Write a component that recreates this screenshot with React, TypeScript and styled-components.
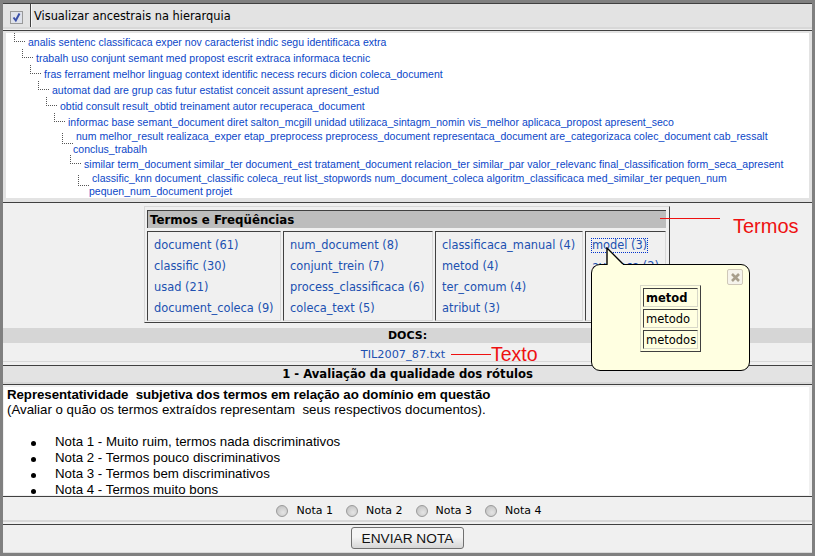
import styled, { createGlobalStyle } from "styled-components";

const Global = createGlobalStyle`
  html, body { margin: 0; padding: 0; background: #f0f0f0; }
  body { font-family: "DejaVu Sans", Verdana, sans-serif; color: #000; }
`;

const treeRows = [
  ["analis sentenc classificaca exper nov caracterist indic segu identificaca extra"],
  ["trabalh uso conjunt semant med propost escrit extraca informaca tecnic"],
  ["fras ferrament melhor linguag context identific necess recurs dicion coleca_document"],
  ["automat dad are grup cas futur estatist conceit assunt apresent_estud"],
  ["obtid consult result_obtid treinament autor recuperaca_document"],
  ["informac base semant_document diret salton_mcgill unidad utilizaca_sintagm_nomin vis_melhor aplicaca_propost apresent_seco"],
  ["num melhor_result realizaca_exper etap_preprocess preprocess_document representaca_document are_categorizaca colec_document cab_ressalt", "conclus_trabalh"],
  ["similar term_document similar_ter document_est tratament_document relacion_ter similar_par valor_relevanc final_classification form_seca_apresent"],
  ["classific_knn document_classific coleca_reut list_stopwords num_document_coleca algoritm_classificaca med_similar_ter pequen_num", "pequen_num_document projet"],
];

const termColumns = [
  ["document (61)", "classific (30)", "usad (21)", "document_coleca (9)"],
  ["num_document (8)", "conjunt_trein (7)", "process_classificaca (6)", "coleca_text (5)"],
  ["classificaca_manual (4)", "metod (4)", "ter_comum (4)", "atribut (3)"],
  ["model (3)", "avaliaca (2)"],
];

const notas = [
  "Nota 1 - Muito ruim, termos nada discriminativos",
  "Nota 2 - Termos pouco discriminativos",
  "Nota 3 - Termos bem discriminativos",
  "Nota 4 - Termos muito bons",
];

export default function App() {
  return (
    <>
      <Global />
      <Page>
        <TopBar>
          <CheckCell>
            <CheckBox>
              <svg width="11" height="11" viewBox="0 0 11 11">
                <path d="M2.5 5.5 L4.8 8.5 L8.5 1.5" fill="none" stroke="#3a4fa8" strokeWidth="2" />
              </svg>
            </CheckBox>
          </CheckCell>
          <TopLabel>Visualizar ancestrais na hierarquia</TopLabel>
        </TopBar>

        <TreeFrame>
          <TreeBox>
            {treeRows.map((lines, i) => (
              <TreeRow key={i} $level={i} $wrapped={lines.length > 1}>
                {lines.map((line, j) => (
                  <TreeLine key={j} $first={j === 0}>{line}</TreeLine>
                ))}
              </TreeRow>
            ))}
          </TreeBox>
        </TreeFrame>

        <TermsArea>
          <TermsPanel>
            <TermsHeader>Termos e Freqüências</TermsHeader>
            <TermsGrid>
              {termColumns.map((col, i) => (
                <TermCell key={i}>
                  {col.map((t, j) => (
                    <TermLink key={t} $focused={i === 3 && j === 0}>{t}</TermLink>
                  ))}
                </TermCell>
              ))}
            </TermsGrid>
          </TermsPanel>
        </TermsArea>

        <DocsBar>DOCS:</DocsBar>
        <DocsRow><DocLink>TIL2007_87.txt</DocLink></DocsRow>

        <SectionBar>1 - Avaliação da qualidade dos rótulos</SectionBar>

        <TextFrame>
          <TextBox>
            <BoldLine>Representatividade&nbsp; subjetiva dos termos em relação ao domínio em questão</BoldLine>
            <br />
            (Avaliar o quão os termos extraídos representam&nbsp; seus respectivos documentos).
            <NotaList>
              {notas.map(n => <NotaItem key={n}>{n}</NotaItem>)}
            </NotaList>
          </TextBox>
        </TextFrame>

        <RadioRow>
          {[1, 2, 3, 4].map(n => (
            <RadioItem key={n}>
              <RadioDot />
              <span>Nota {n}</span>
            </RadioItem>
          ))}
        </RadioRow>

        <ButtonRow>
          <SendButton>ENVIAR NOTA</SendButton>
        </ButtonRow>

        <TermosLine />
        <TermosNote>Termos</TermosNote>
        <TextoLine />
        <TextoNote>Texto</TextoNote>

        <Popup>
          <PopupTail width="18" height="19" viewBox="0 0 18 19">
            <path d="M1 19 L1 1 L17 17 L17 19 Z" fill="#ffffe1" />
            <path d="M1 18 L1 1 L17 17" fill="none" stroke="#000" strokeWidth="1.4" />
          </PopupTail>
          <CloseBtn>
            <svg width="11" height="11" viewBox="0 0 11 11">
              <path d="M2 2 L9 9 M9 2 L2 9" stroke="#a89f8c" strokeWidth="2.6" />
            </svg>
          </CloseBtn>
          <StemTable>
            <StemCell $bold>metod</StemCell>
            <StemCell>metodo</StemCell>
            <StemCell>metodos</StemCell>
          </StemTable>
        </Popup>
      </Page>
    </>
  );
}

const Page = styled.div`
  position: relative;
  box-sizing: border-box;
  width: 815px;
  height: 556px;
  overflow: hidden;
  background: #f0f0f0;
  border: 3px solid #808080;
  display: flex;
  flex-direction: column;
`;

const TopBar = styled.div`
  display: flex;
  height: 26px;
  flex: none;
  background: #e3e3e3;
  border-top: 1px solid #404040;
  border-bottom: 2px solid #d8d8d8;
  box-sizing: border-box;
`;

const CheckCell = styled.div`
  width: 28px;
  display: flex;
  justify-content: center;
  padding-top: 7px;
  box-sizing: border-box;
  border-right: 1px solid #404040;
  box-shadow: 1px 0 0 #f8f8f8;
`;

const CheckBox = styled.div`
  box-sizing: border-box;
  width: 13px;
  height: 13px;
  background: #dfe2ea;
  border: 1px solid #999;
  display: flex;
  align-items: center;
  justify-content: center;
`;

const TopLabel = styled.div`
  font-size: 11.4px;
  line-height: 25px;
  padding-left: 3px;
`;

const TreeFrame = styled.div`
  flex: none;
  height: 173px;
  box-sizing: border-box;
  padding: 2px 3px 4px 3px;
  background: #e3e3e3;
  border-top: 1px solid #404040;
  border-bottom: 1px solid #404040;
  margin-top: 1px;
`;

const TreeBox = styled.div`
  height: 164px;
  background: #fff;
  overflow: hidden;
  padding-top: 1px;
`;

const TreeRow = styled.div<{ $level: number; $wrapped: boolean }>`
  position: relative;
  padding-left: ${p => 19 + p.$level * 8}px;
  font-family: "Liberation Sans", Arial, sans-serif;
  font-size: 10.5px;
  letter-spacing: 0.03px;
  line-height: ${p => (p.$wrapped ? 13 : 16)}px;
  color: #0a46c8;
  white-space: nowrap;

  &::before {
    content: "";
    position: absolute;
    left: ${p => 8 + p.$level * 8}px;
    top: ${p => (p.$wrapped ? 3 : -1)}px;
    width: 10px;
    height: ${p => (p.$wrapped ? 10 : 8)}px;
    border-left: 1px dotted #555;
    border-bottom: 1px dotted #555;
  }
`;

const TreeLine = styled.div<{ $first: boolean }>`
  padding-left: ${p => (p.$first ? 3 : 0)}px;
`;

const TermsArea = styled.div`
  flex: none;
  height: 125px;
  box-sizing: border-box;
  padding: 3px 0 0 141px;
`;

const TermsPanel = styled.div`
  box-sizing: border-box;
  width: 526px;
  height: 117px;
  padding: 3px 3px 0 2px;
  border-top: 1px solid #d8d8d8;
  border-left: 1px solid #d8d8d8;
  border-right: 1px solid #404040;
  border-bottom: 1px solid #404040;
`;

const TermsHeader = styled.div`
  box-sizing: border-box;
  height: 18px;
  background: #bdbdbd;
  border-top: 1px solid #404040;
  border-left: 1px solid #404040;
  font-size: 11.8px;
  font-weight: bold;
  line-height: 18px;
  padding-left: 2px;
`;

const TermsGrid = styled.div`
  display: grid;
  grid-template-columns: 134px 150px 148px 81px;
  gap: 2px;
  margin-top: 3px;
`;

const TermCell = styled.div`
  box-sizing: border-box;
  height: 90px;
  padding: 3px 0 0 6px;
  border-top: 1px solid #404040;
  border-left: 1px solid #404040;
  border-right: 1px solid #d8d8d8;
  border-bottom: 1px solid #d8d8d8;
  overflow: hidden;
`;

const TermLink = styled.div<{ $focused: boolean }>`
  font-size: 11.4px;
  line-height: 21px;
  color: #2050b0;
  white-space: nowrap;
  width: fit-content;
  ${p => p.$focused && `
    line-height: 13px;
    margin: 4px 0 4px 0;
    outline: 1px dotted #0033cc;
  `}
`;

const DocsBar = styled.div`
  flex: none;
  height: 15px;
  background: #d6d6d6;
  font-size: 11px;
  font-weight: bold;
  line-height: 15px;
  text-align: center;
`;

const DocsRow = styled.div`
  flex: none;
  height: 19px;
  box-sizing: border-box;
  padding-right: 9px;
  border-bottom: 1px solid #d8d8d8;
  text-align: center;
  line-height: 19px;
`;

const DocLink = styled.span`
  font-size: 11.3px;
  color: #2050b0;
`;

const SectionBar = styled.div`
  flex: none;
  box-sizing: border-box;
  height: 19px;
  margin-top: 3px;
  background: #e3e3e3;
  border-top: 1px solid #404040;
  border-bottom: 2px solid #d8d8d8;
  font-size: 11.65px;
  font-weight: bold;
  line-height: 16px;
  text-align: center;
`;

const TextFrame = styled.div`
  flex: none;
  box-sizing: border-box;
  height: 112px;
  padding: 2px 3px 1px 1px;
  border-top: 1px solid #404040;
  background: #f0f0f0;
`;

const TextBox = styled.div`
  box-sizing: border-box;
  height: 108px;
  overflow: hidden;
  background: #fff;
  padding: 0 0 0 3px;
  font-family: "Liberation Sans", Arial, sans-serif;
  font-size: 13.3px;
  line-height: 15px;
`;

const BoldLine = styled.strong`
  letter-spacing: -0.07px;
`;

const NotaList = styled.ul`
  margin: 17px 0 0 0;
  padding: 0 0 0 24px;
  list-style: none;
  line-height: 16px;
`;

const NotaItem = styled.li`
  display: flex;

  &::before {
    content: "";
    flex: none;
    width: 5px;
    height: 5px;
    margin: 7px 19px 0 0;
    border-radius: 50%;
    background: #000;
  }
`;

const RadioRow = styled.div`
  flex: none;
  box-sizing: border-box;
  height: 26px;
  display: flex;
  justify-content: center;
  gap: 13px;
  padding: 4px 0 0 3px;
  border-top: 1px solid #404040;
  border-bottom: 2px solid #d8d8d8;
  font-size: 11px;
`;

const RadioItem = styled.div`
  display: flex;
  align-items: center;
  gap: 8px;
  height: 18px;
`;

const RadioDot = styled.span`
  box-sizing: border-box;
  width: 12px;
  height: 12px;
  margin-top: 2px;
  border-radius: 50%;
  border: 1px solid #9a9a9a;
  background: radial-gradient(circle at 60% 65%, #e4e4e4, #bcbcbc);
`;

const ButtonRow = styled.div`
  flex: none;
  box-sizing: border-box;
  height: 29px;
  margin-top: 2px;
  display: flex;
  justify-content: center;
  padding-top: 2px;
  border-top: 1px solid #404040;
  border-bottom: 1px solid #d8d8d8;
`;

const SendButton = styled.button`
  box-sizing: border-box;
  width: 113px;
  height: 22px;
  padding: 0;
  border: 1px solid #707070;
  border-radius: 3px;
  background: linear-gradient(#f4f4f4 45%, #d6d6d6);
  font-family: "Liberation Sans", Arial, sans-serif;
  font-size: 13.7px;
  color: #111;
`;

const TermosLine = styled.div`
  position: absolute;
  left: 657px;
  top: 215px;
  width: 60px;
  height: 1px;
  background: #ee1111;
`;

const TermosNote = styled.div`
  position: absolute;
  left: 730px;
  top: 211px;
  font-family: "Liberation Sans", Arial, sans-serif;
  font-size: 20px;
  line-height: 24px;
  color: #ee1111;
`;

const TextoLine = styled.div`
  position: absolute;
  left: 448px;
  top: 351px;
  width: 40px;
  height: 1px;
  background: #ee1111;
`;

const TextoNote = styled.div`
  position: absolute;
  left: 488px;
  top: 340px;
  font-family: "Liberation Sans", Arial, sans-serif;
  font-size: 19.5px;
  line-height: 22px;
  color: #ee1111;
`;

const Popup = styled.div`
  position: absolute;
  left: 588px;
  top: 261px;
  box-sizing: border-box;
  width: 159px;
  height: 107px;
  background: #ffffe1;
  border: 1.5px solid #000;
  border-radius: 9px;
  display: flex;
  justify-content: center;
  padding-top: 20px;
`;

const PopupTail = styled.svg`
  position: absolute;
  left: 14px;
  top: -18px;
`;

const CloseBtn = styled.div`
  position: absolute;
  right: 6px;
  top: 4px;
  box-sizing: border-box;
  width: 16px;
  height: 16px;
  border: 1px solid #cfc8b8;
  border-radius: 2px;
  background: #f6f4ec;
  display: flex;
  align-items: center;
  justify-content: center;
`;

const StemTable = styled.div`
  box-sizing: border-box;
  width: 61px;
  height: 67px;
  padding: 2px;
  display: flex;
  flex-direction: column;
  gap: 2px;
  border-top: 1px solid #d8d8c8;
  border-left: 1px solid #d8d8c8;
  border-right: 1px solid #404040;
  border-bottom: 1px solid #404040;
`;

const StemCell = styled.div<{ $bold?: boolean }>`
  box-sizing: border-box;
  height: 19px;
  padding-left: 2px;
  border-top: 1px solid #404040;
  border-left: 1px solid #404040;
  border-right: 1px solid #d8d8c8;
  border-bottom: 1px solid #d8d8c8;
  font-size: 11.5px;
  line-height: 18px;
  font-weight: ${p => (p.$bold ? "bold" : "normal")};
`;
